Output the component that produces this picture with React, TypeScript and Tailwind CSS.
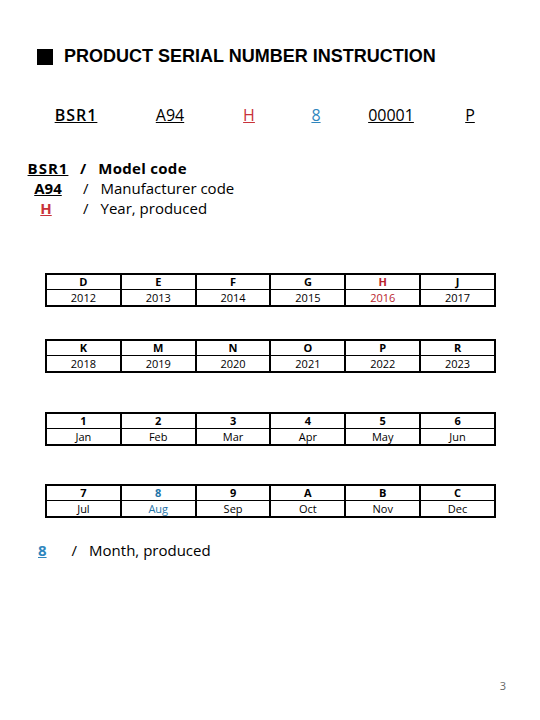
import React from 'react';

const body = { fontFamily: '"Open Sans", "Noto Sans", sans-serif' };

const yearRows = [
  [['D', '2012'], ['E', '2013'], ['F', '2014'], ['G', '2015'], ['H', '2016'], ['J', '2017']],
  [['K', '2018'], ['M', '2019'], ['N', '2020'], ['O', '2021'], ['P', '2022'], ['R', '2023']],
];

const monthRows = [
  [['1', 'Jan'], ['2', 'Feb'], ['3', 'Mar'], ['4', 'Apr'], ['5', 'May'], ['6', 'Jun']],
  [['7', 'Jul'], ['8', 'Aug'], ['9', 'Sep'], ['A', 'Oct'], ['B', 'Nov'], ['C', 'Dec']],
];

const CodeTable = ({ cells, hl, hlColor }: { cells: string[][]; hl?: string; hlColor?: string }) => (
  <div className="ml-[45px] w-[451px] border-2 border-black flex text-[11px] text-black">
    {cells.map(([code, label], i) => {
      const active = code === hl;
      return (
        <div
          key={code}
          className={`flex-1 flex flex-col ${i < cells.length - 1 ? 'border-r-2 border-black' : ''}`}
          style={active ? { color: hlColor } : undefined}
        >
          <div className="h-[15px] leading-[14px] text-center font-bold border-b border-black">{code}</div>
          <div className="h-[15px] leading-[15px] text-center">{label}</div>
        </div>
      );
    })}
  </div>
);

export default function App() {
  return (
    <div className="w-[540px] h-[720px] bg-white flex flex-col text-black" style={body}>
      {/* Title */}
      <div className="mt-[48px] ml-[37px] h-[17px] flex items-center gap-[11px]">
        <span className="w-[16px] h-[16px] bg-black block"></span>
        <span
          className="text-[18px] leading-[17px] font-bold"
          style={{ fontFamily: '"Liberation Sans", Arial, sans-serif' }}
        >
          PRODUCT SERIAL NUMBER INSTRUCTION
        </span>
      </div>

      {/* Serial breakdown */}
      <div className="mt-[40px] ml-[36px] grid grid-cols-[80px_108px_50px_84px_66px_92px] text-[16px] leading-[20px]">
        <span className="text-center underline font-semibold tracking-[1px]">BSR1</span>
        <span className="text-center underline">A94</span>
        <span className="text-center underline text-[#c8323a]">H</span>
        <span className="text-center underline text-[#2f86bd]">8</span>
        <span className="text-center underline">00001</span>
        <span className="text-center underline">P</span>
      </div>

      {/* Legend */}
      <div className="mt-[33px] flex flex-col text-[15px] leading-[20px]">
        <div className="flex">
          <span className="ml-[26px] w-[44px] text-center font-bold underline tracking-[1px]">BSR1</span>
          <span className="ml-[10px] font-bold">/</span>
          <span className="ml-[12px] font-bold tracking-[0.3px]">Model code</span>
        </div>
        <div className="flex">
          <span className="ml-[26px] w-[44px] text-center font-bold underline">A94</span>
          <span className="ml-[13px]">/</span>
          <span className="ml-[12px]">Manufacturer code</span>
        </div>
        <div className="flex">
          <span className="ml-[26px] w-[40px] text-center font-bold underline text-[#c8323a]">H</span>
          <span className="ml-[17px]">/</span>
          <span className="ml-[12px]">Year, produced</span>
        </div>
      </div>

      {/* Year tables */}
      <div className="mt-[55px]">
        <CodeTable cells={yearRows[0]} hl="H" hlColor="#b8242c" />
      </div>
      <div className="mt-[32px]">
        <CodeTable cells={yearRows[1]} />
      </div>

      {/* Month tables */}
      <div className="mt-[39px]">
        <CodeTable cells={monthRows[0]} />
      </div>
      <div className="mt-[38px]">
        <CodeTable cells={monthRows[1]} hl="8" hlColor="#2474a8" />
      </div>

      <div className="mt-[22px] flex text-[15px] leading-[20px]">
        <span className="ml-[38px] font-bold underline text-[#2f86bd]">8</span>
        <span className="ml-[25px]">/</span>
        <span className="ml-[12px]">Month, produced</span>
      </div>

      <div className="mt-auto pb-[27px] pr-[34px] text-right text-[11px] leading-[14px] text-[#666666]">3</div>
    </div>
  );
}
